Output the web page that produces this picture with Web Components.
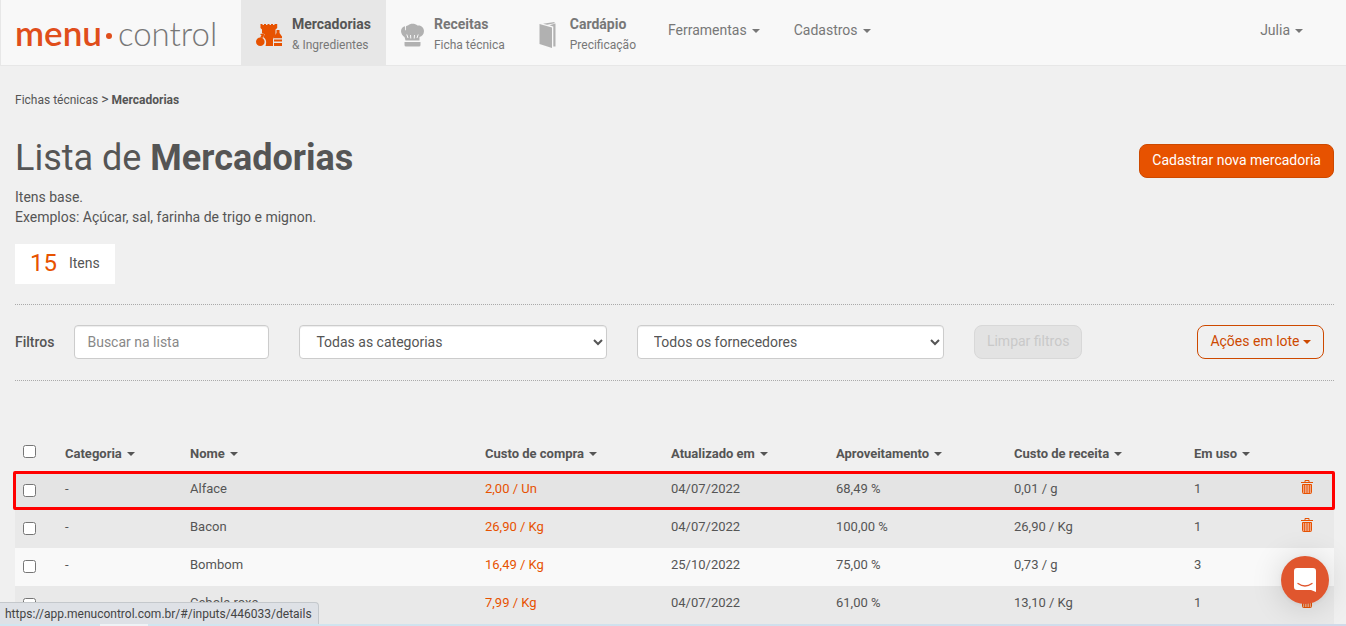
<!DOCTYPE html>
<html lang="pt-BR">
<head>
<meta charset="utf-8">
<meta name="viewport" content="width=device-width, initial-scale=1">
<title>Menu Control - Mercadorias</title>
<style>
  html, body { margin: 0; background: #f0f0f0; }
  body {
    --brand: #e75200;
    --brand-dark: #cd4900;
    font: 14px/20px Roboto, "Liberation Sans", sans-serif;
    color: #555;
    height: 100vh;
    overflow: hidden;
  }
</style>
</head>
<body>
<mc-app></mc-app>

<script>
const define = (name, html, setup) => {
  const template = document.createElement('template');
  template.innerHTML = html;
  customElements.define(name, class extends HTMLElement {
    constructor() {
      super();
      this.attachShadow({ mode: 'open' }).append(template.content.cloneNode(true));
    }
    connectedCallback() {
      if (setup) setup(this, this.shadowRoot);
    }
  });
};

/* Small downward triangle used by menus and sortable headers */
define('mc-caret', `
<style>
  :host { display: inline-block; border: 4px solid transparent; border-top-color: currentColor; border-bottom: 0; vertical-align: middle; }
</style>`);

define('mc-logo', `
<style>
  :host { display: block; }
  a { display: flex; align-items: baseline; font-family: Lato, sans-serif; line-height: 44px; color: #777; text-decoration: none; }
  .menu { font-size: 35px; font-weight: 600; color: #e04e1b; }
  .dot { width: 6px; height: 6px; border-radius: 50%; background: #e04e1b; margin: 6px 6px 0 4px; align-self: center; }
  .control { font-size: 33px; font-weight: 300; }
</style>
<a href="#/"><span class="menu">menu</span><span class="dot"></span><span class="control">control</span></a>`);

/* Navigation entry with an icon, a title and a subtitle */
define('mc-nav-item', `
<style>
  :host { display: flex; color: #777; }
  :host([active]) { background: #e7e7e7; }
  a { display: flex; align-items: center; gap: 10px; padding: 4px 15px 0; color: inherit; text-decoration: none; }
  .text { display: flex; flex-direction: column; gap: 1px; }
  .title { font-weight: 700; }
  .sub { font-size: 12px; }
  :host([active]) .title { color: #555; }
</style>
<a href="#"><slot name="icon"></slot><span class="text"><span class="title"><slot name="title"></slot></span><span class="sub"><slot></slot></span></span></a>`,
(el, root) => { root.querySelector('a').setAttribute('href', el.getAttribute('href')); });

define('mc-nav-menu', `
<style>
  :host { display: block; }
  button { font: inherit; color: #777; background: none; border: 0; margin: 0; padding: 20px 17px; cursor: pointer; }
  mc-caret { margin-left: 5px; }
</style>
<button type="button" aria-haspopup="true"><slot></slot><mc-caret></mc-caret></button>`);

define('mc-navbar', `
<style>
  :host { display: flex; box-sizing: border-box; height: 66px; background: #f8f8f8; border: 1px solid #e7e7e7; border-width: 0 0 1px 1px; }
  mc-logo { box-sizing: border-box; flex: none; width: 240px; padding: 10px 0 0 14px; }
  nav { display: flex; }
  .user { margin-left: auto; padding-right: 26px; }
  svg { display: block; flex: none; }
</style>
<mc-logo></mc-logo>
<nav>
  <mc-nav-item href="#/inputs" active>
    <svg slot="icon" width="26" height="24" viewBox="0 0 26 24" fill="#e75200">
      <path d="M4.500 1H6.500V2H8V1H10V2H11.500V1H13.500V2H15V1H17V2H18.500V1H21.200V5L19.500 6.500V12L17 16V23H9.500C11 19 10 15.500 7 14L9 11.500 6 10V6.500L4.500 5Z"/>
      <circle cx="4.300" cy="18.700" r="4.300"/>
      <path d="M4 14.500 5.500 12.500 4 11 7 10.500 9 12 7.500 13 6.500 15Z"/>
      <path d="M20.500 7H23.500V10L26 13.500V15.200H18V13.500L20.500 10ZM18 16.500H26V18.500H18ZM18 20H26V23H18Z"/>
    </svg>
    <span slot="title">Mercadorias</span>&amp; Ingredientes
  </mc-nav-item>
  <mc-nav-item href="#/recipes">
    <svg slot="icon" width="23" height="24" viewBox="0 0 23 24" fill="#b1b1b1">
      <path d="M5 3.200C6 2.500 6.500 2.500 7 2.600 9 0 14 0 16.500 2.500 20 1.800 23 4.500 23 8c0 3-2 5.500-4.500 6L18.500 17.500H4.500L3.500 14C1.500 13 0 10.500 0 8 0 5.500 2 3.600 4 3.300L4.200 7.500 5 7Z"/>
      <path d="M3.500 19H19.500V22Q19.500 23.500 18 23.500H5Q3.500 23.500 3.500 22Z"/>
      <path d="M5.800 11.500 7 15M9.500 12 9.800 15.500M13.500 12 13.200 15.500M17.200 11.500 16 15" stroke="#f8f8f8" stroke-width="1" fill="none"/>
    </svg>
    <span slot="title">Receitas</span>Ficha técnica
  </mc-nav-item>
  <mc-nav-item href="#/menu">
    <svg slot="icon" width="25" height="28" viewBox="0 0 25 28" fill="#b1b1b1">
      <path d="M4.500 3 17 6.500V27L4.500 23Z"/>
      <path d="M8 2.700 19.500 1V2.200L12 3.800ZM14.500 4.200 20.500 2.500V25.500H18.300V5.500Z"/>
    </svg>
    <span slot="title">Cardápio</span>Precificação
  </mc-nav-item>
  <mc-nav-menu>Ferramentas</mc-nav-menu>
  <mc-nav-menu>Cadastros</mc-nav-menu>
</nav>
<mc-nav-menu class="user">Julia</mc-nav-menu>`);

define('mc-button', `
<style>
  :host { display: block; }
  button { box-sizing: border-box; height: 34px; padding: 0 12px 2px; font: inherit; white-space: nowrap; border: 1px solid var(--brand-dark); border-radius: 8px; background: transparent; color: var(--brand-dark); cursor: pointer; }
  :host([primary]) button { background: var(--brand); color: #fff; }
  button:disabled { background: #e3e3e3; border-color: #d8d8d8; color: #c9c9c9; cursor: default; }
</style>
<button type="button"><slot></slot></button>`,
(el, root) => { root.querySelector('button').disabled = el.hasAttribute('disabled'); });

define('mc-page-header', `
<style>
  :host { display: block; }
  .crumbs { font-size: 12px; padding-top: 24px; }
  .crumbs span { font-size: 14px; line-height: 16px; }
  a { color: inherit; text-decoration: none; }
  .heading { display: flex; justify-content: space-between; align-items: center; margin-top: 26px; }
  h1 { margin: 0; font-size: 36px; line-height: 44px; font-weight: 400; }
  h1 b { font-weight: 700; }
  mc-button { padding-top: 6px; }
  p { margin: 7px 0 17px; }
  .count { display: inline-flex; box-sizing: border-box; align-items: center; gap: 12px; height: 40px; padding: 0 15px 2px; background: #fff; vertical-align: top; }
  .count strong { font-size: 24px; font-weight: 400; color: var(--brand); }
</style>
<div class="crumbs"><a href="#/">Fichas técnicas</a> <span>&gt;</span> <b>Mercadorias</b></div>
<div class="heading">
  <h1>Lista de <b>Mercadorias</b></h1>
  <mc-button primary>Cadastrar nova mercadoria</mc-button>
</div>
<p>Itens base.<br>Exemplos: Açúcar, sal, farinha de trigo e mignon.</p>
<div class="count"><strong>15</strong><span>Itens</span></div>`);

define('mc-filters', `
<style>
  :host { display: flex; align-items: center; gap: 30px; margin-top: 20px; padding: 20px 10px 21px 0; border: 1px dotted #aaa; border-width: 1px 0; }
  .search { display: flex; align-items: center; gap: 20px; font-weight: 500; }
  input, select { box-sizing: border-box; height: 34px; margin: 0; font: 400 14px/20px Roboto, sans-serif; color: #555; background: #fff; border: 1px solid #ccc; border-radius: 4px; box-shadow: inset 0 1px 1px #00000013; }
  input { width: 195px; padding: 0 12px; }
  input::placeholder { color: #888; opacity: 1; }
  select { flex: 1; min-width: 0; padding: 0 0 0 12px; }
  .actions { margin-left: 85px; }
</style>
<label class="search">Filtros <input type="text" placeholder="Buscar na lista"></label>
<select aria-label="Categoria"><option>Todas as categorias</option></select>
<select aria-label="Fornecedor"><option>Todos os fornecedores</option></select>
<mc-button disabled>Limpar filtros</mc-button>
<mc-button class="actions">Ações em lote <mc-caret></mc-caret></mc-button>`);

define('mc-trash', `
<style>
  :host { display: block; }
  button { display: block; margin: 0 0 4px auto; padding: 0; border: 0; background: none; cursor: pointer; }
  svg { display: block; }
</style>
<button type="button" aria-label="Excluir">
  <svg width="12" height="14" viewBox="0 0 12 14" fill="none" stroke="#e75200">
    <path d="M0 2.500H12M4 2V.5H8V2"/>
    <path d="M1.500 4.500H10.500V12.500Q10.500 13.500 9.500 13.500H2.500Q1.500 13.500 1.500 12.500Z" fill="#f0a583"/>
    <path d="M3.500 5V13M6 5V13M8.500 5V13" stroke-width=".8"/>
  </svg>
</button>`);

define('mc-item-table', `
<style>
  :host { display: block; margin-top: 60px; font-size: 13px; }
  table { width: 100%; table-layout: fixed; border-collapse: collapse; }
  th, td { box-sizing: border-box; padding: 0 8px; text-align: left; white-space: nowrap; }
  th { height: 31px; padding-bottom: 6px; font-weight: 700; }
  td { height: 38px; padding-bottom: 4px; }
  th button { font: inherit; color: inherit; padding: 0; border: 0; background: none; cursor: pointer; }
  th mc-caret { margin-left: 5px; }
  tbody tr { background: #f9f9f9; }
  tbody tr.shaded { background: #e9e9e9; }
  tbody tr.hover { position: relative; background: #e4e4e4; }
  tr.hover td:first-child::after { content: ""; position: absolute; inset: -1px -1px 0 -2px; border: 3px solid #f00; border-radius: 2px; pointer-events: none; }
  input { display: block; width: 13px; height: 13px; margin: 0 0 4px; }
  td input { margin: 3px 0 0; }
  a { color: var(--brand); text-decoration: none; }
  td:last-child { padding-right: 21px; }
  .w-check { width: 42px; } .w-category { width: 125px; } .w-buy { width: 186px; }
  .w-date { width: 165px; } .w-yield { width: 178px; } .w-cost { width: 180px; }
  .w-use { width: 74px; } .w-del { width: 74px; }
</style>
<table>
  <colgroup><col class="w-check"><col class="w-category"><col><col class="w-buy"><col class="w-date"><col class="w-yield"><col class="w-cost"><col class="w-use"><col class="w-del"></colgroup>
  <thead><tr><th><input type="checkbox" aria-label="Selecionar todos"></th></tr></thead>
  <tbody></tbody>
</table>`,
(el, root) => {
  const columns = ['Categoria', 'Nome', 'Custo de compra', 'Atualizado em', 'Aproveitamento', 'Custo de receita', 'Em uso'];
  const items = [
    ['-', 'Alface', '2,00 / Un', '04/07/2022', '68,49 %', '0,01 / g', '1'],
    ['-', 'Bacon', '26,90 / Kg', '04/07/2022', '100,00 %', '26,90 / Kg', '1'],
    ['-', 'Bombom', '16,49 / Kg', '25/10/2022', '75,00 %', '0,73 / g', '3'],
    ['-', 'Cebola roxa', '7,99 / Kg', '04/07/2022', '61,00 %', '13,10 / Kg', '1']
  ];
  root.querySelector('thead tr').insertAdjacentHTML('beforeend',
    columns.map(c => `<th><button type="button">${c}<mc-caret></mc-caret></button></th>`).join('') + '<th></th>');
  root.querySelector('tbody').innerHTML = items.map((item, i) => `
    <tr class="${i === 0 ? 'hover' : i === 2 ? '' : 'shaded'}">
      <td><input type="checkbox" aria-label="Selecionar ${item[1]}"></td>
      ${item.map((v, c) => `<td>${c === 2 ? `<a href="#/inputs">${v}</a>` : v}</td>`).join('')}
      <td>${i === 2 ? '' : '<mc-trash></mc-trash>'}</td>
    </tr>`).join('');
});

define('mc-chat', `
<style>
  :host { position: fixed; right: 17px; bottom: 22px; }
  button { display: grid; place-items: center; width: 48px; height: 48px; padding: 0; border: 0; border-radius: 50%; background: #e0562e; box-shadow: 0 1px 6px #0000000f, 0 2px 32px #00000029; cursor: pointer; }
</style>
<button type="button" aria-label="Abrir chat">
  <svg width="22" height="24" viewBox="0 0 22 24">
    <path d="M3 0H19Q22 0 22 3V24L17 22H3Q0 22 0 19V3Q0 0 3 0Z" fill="#fff"/>
    <path d="M4 15.500Q11 20.500 18 15.500" fill="none" stroke="#e0562e" stroke-width="1.300" stroke-linecap="round"/>
  </svg>
</button>`);

/* Link address bubble and the thin edge below it */
define('mc-status', `
<style>
  :host { position: fixed; left: 0; right: 0; bottom: 0; pointer-events: none; }
  .url { display: inline-block; vertical-align: top; box-sizing: border-box; height: 22px; padding: 0 6px 0 5px; border: 1px solid #c4c8cc; border-width: 1px 1px 0 0; border-radius: 0 4px 0 0; background: #dee1e6; color: #444; font: 12px/22px Roboto, sans-serif; }
  .edge { height: 2px; background: linear-gradient(90deg, #d0e6f0 100px, #eef3f6 100px, #eef3f6 148px, #d0e6f0 148px, #d0daea); }
</style>
<div class="url">https://app.menucontrol.com.br/#/inputs/446033/details</div>
<div class="edge"></div>`);

define('mc-app', `
<style>
  :host { display: block; }
  main { padding: 0 12px 0 15px; }
</style>
<mc-navbar></mc-navbar>
<main>
  <mc-page-header></mc-page-header>
  <mc-filters></mc-filters>
  <mc-item-table></mc-item-table>
</main>
<mc-chat></mc-chat>
<mc-status></mc-status>`);
</script>
</body>
</html>
